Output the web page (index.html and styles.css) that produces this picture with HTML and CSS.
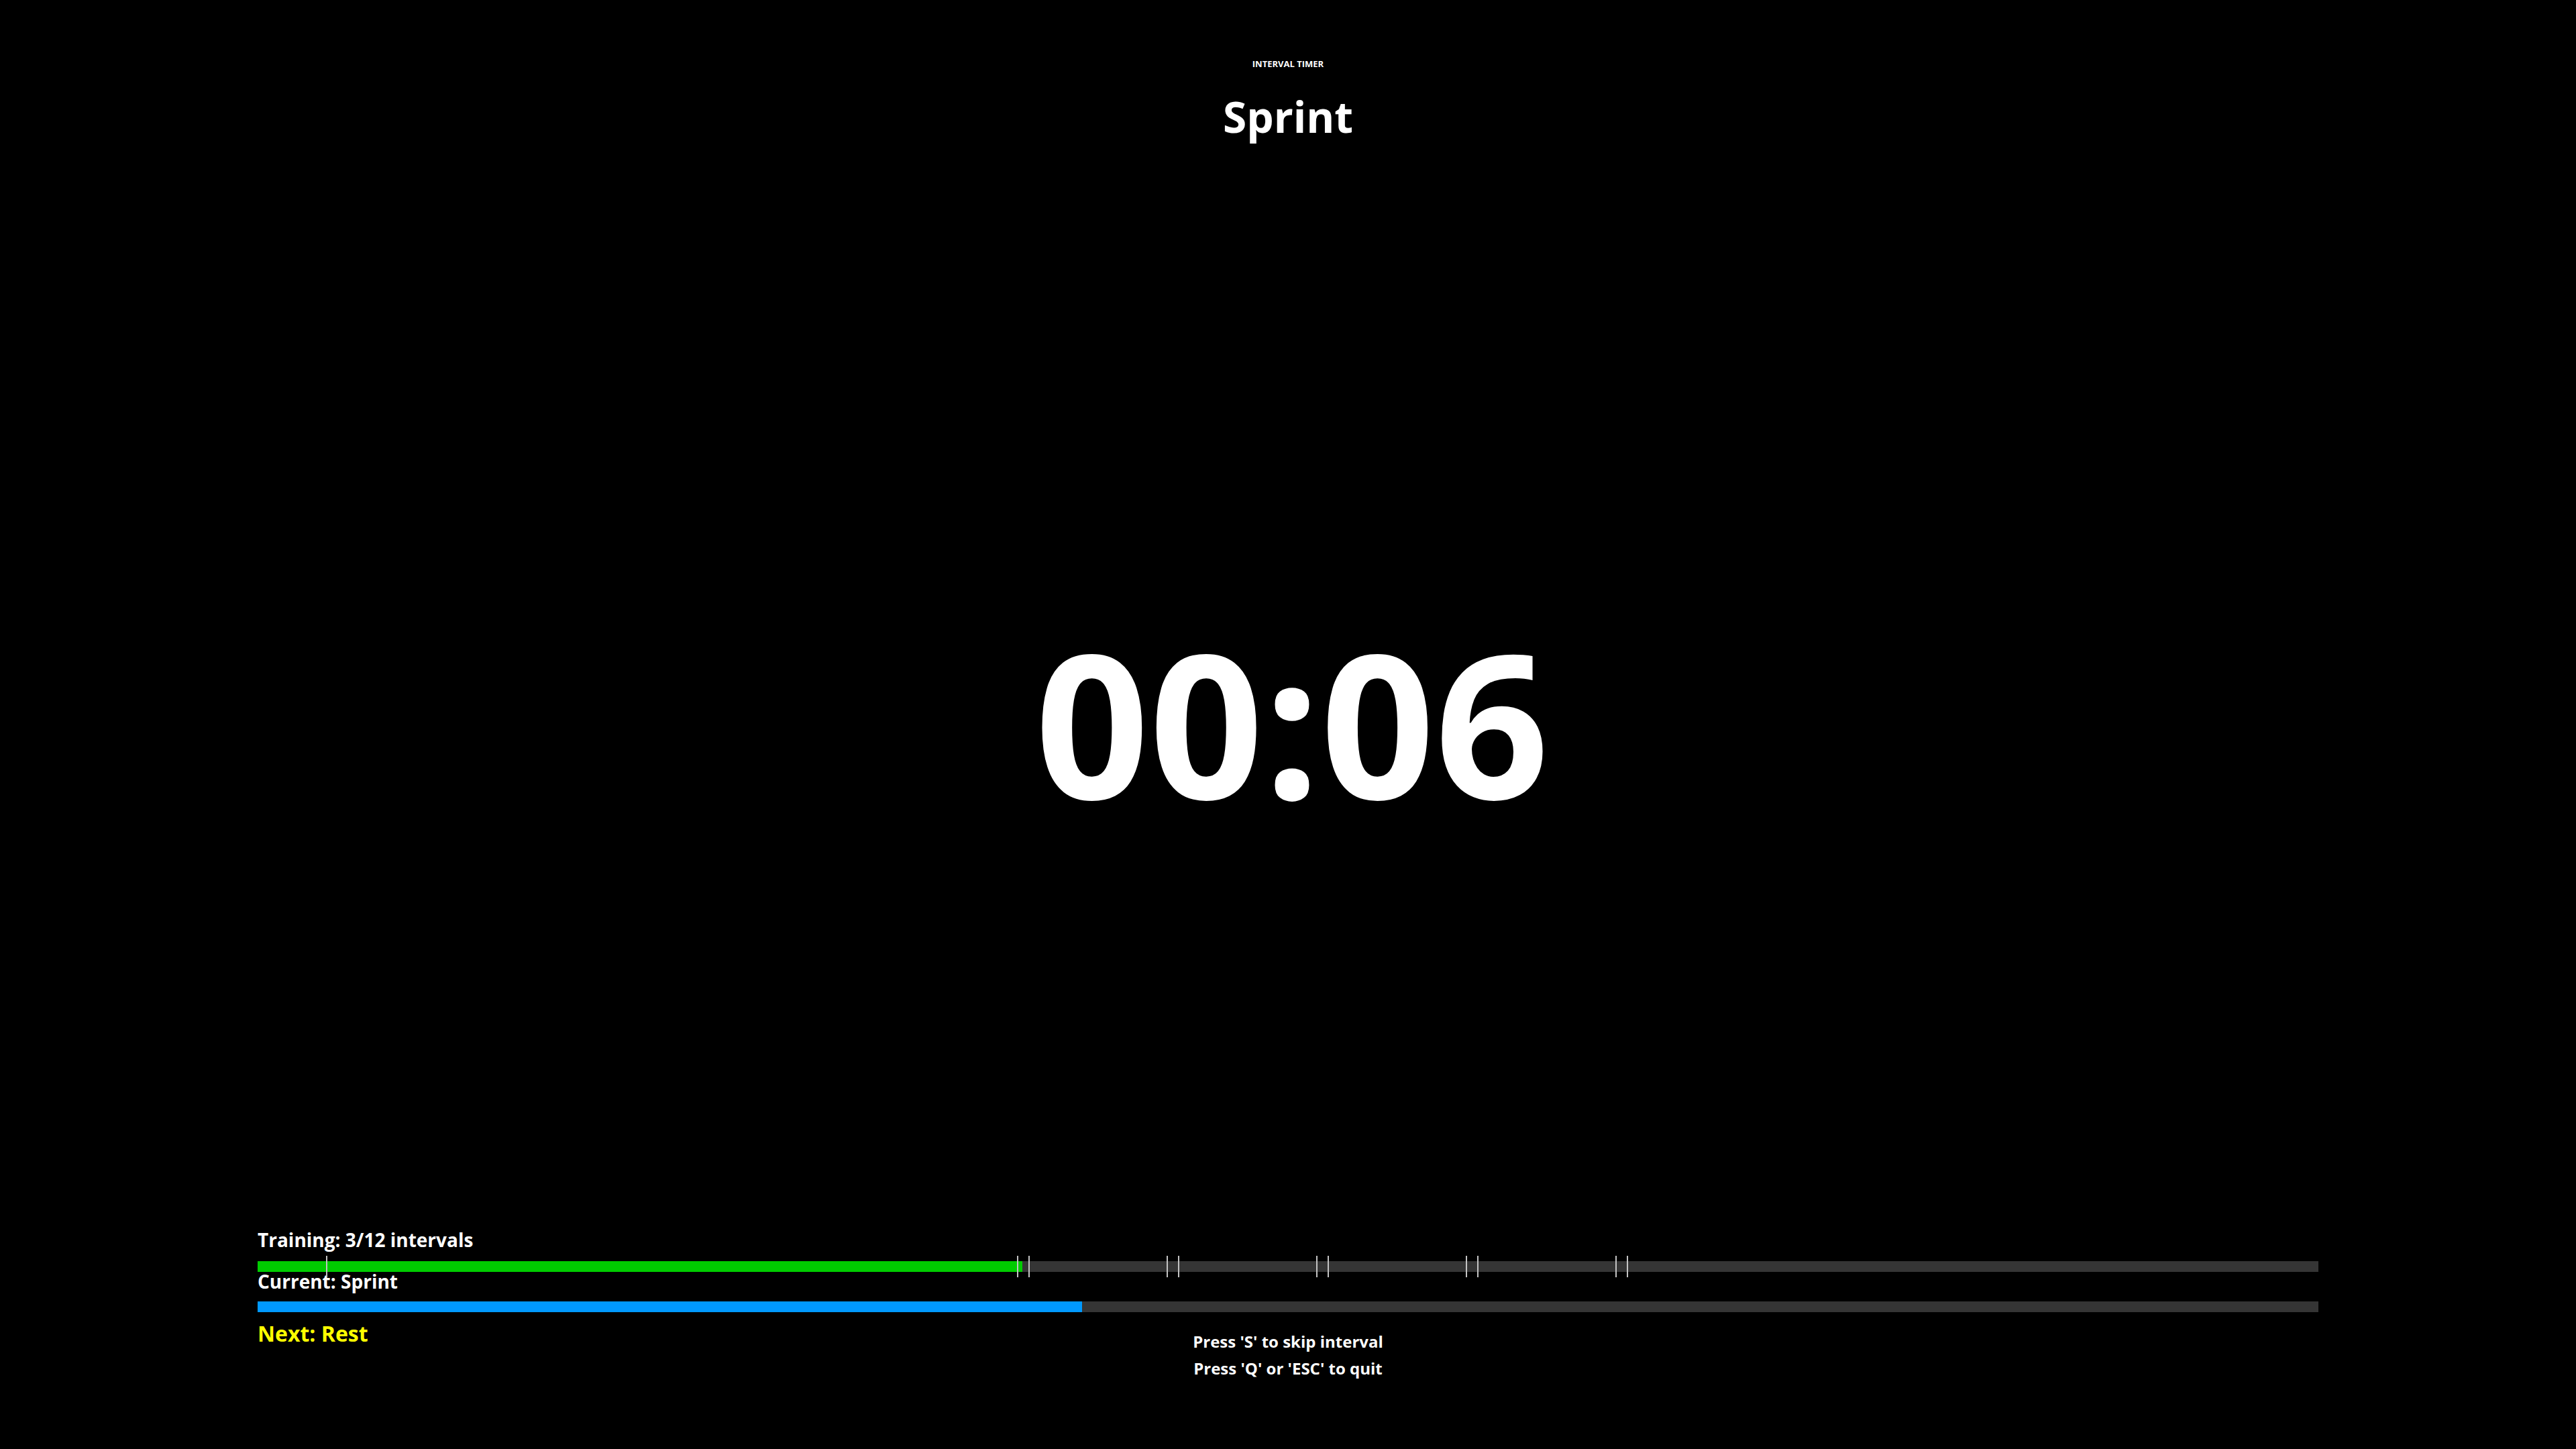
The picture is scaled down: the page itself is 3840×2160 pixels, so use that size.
FILE: index.html
```html
<!DOCTYPE html>
<html lang="en">
<head>
<meta charset="utf-8">
<title>Interval Timer</title>
<link rel="stylesheet" href="styles.css">
</head>
<body>
<div class="app">
  <header class="header">
    <div class="eyebrow">INTERVAL TIMER</div>
    <h1 class="phase">Sprint</h1>
  </header>
  <main class="clock">
    <div class="timer">00:06</div>
  </main>
  <footer class="footer">
    <div class="label">Training: 3/12 intervals</div>
    <div class="track track-total">
      <div class="fill fill-green" style="width:37.095%"></div>
      <span class="marker" style="left:3.352%"></span>
      <span class="marker" style="left:36.872%"></span>
      <span class="marker" style="left:37.430%"></span>
      <span class="marker" style="left:44.134%"></span>
      <span class="marker" style="left:44.693%"></span>
      <span class="marker" style="left:51.397%"></span>
      <span class="marker" style="left:51.955%"></span>
      <span class="marker" style="left:58.659%"></span>
      <span class="marker" style="left:59.218%"></span>
      <span class="marker" style="left:65.922%"></span>
      <span class="marker" style="left:66.480%"></span>
    </div>
    <div class="label label-current">Current: Sprint</div>
    <div class="track track-current">
      <div class="fill fill-blue" style="width:40%"></div>
    </div>
    <div class="bottom">
      <div class="next">Next: Rest</div>
      <div class="help">
        <div>Press 'S' to skip interval</div>
        <div>Press 'Q' or 'ESC' to quit</div>
      </div>
    </div>
  </footer>
</div>
</body>
</html>
```

FILE: styles.css
```css
html, body {
  margin: 0;
  padding: 0;
  background: #000;
}

body {
  font-family: "Open Sans", "Noto Sans", "Liberation Sans", sans-serif;
  font-weight: 700;
  color: #fff;
}

.app {
  width: 3840px;
  height: 2160px;
  display: flex;
  flex-direction: column;
  box-sizing: border-box;
  padding-top: 89px;
  overflow: hidden;
}

.header {
  display: flex;
  flex-direction: column;
  align-items: center;
}

.eyebrow {
  font-size: 13px;
  line-height: 1;
}

.phase {
  margin: 40px 0 0;
  font-size: 64px;
  line-height: 1;
  font-weight: 700;
}

.clock {
  display: flex;
  justify-content: center;
  margin-top: 720px;
}

.timer {
  font-size: 298px;
  line-height: 1;
  padding-left: 12px;
}

.footer {
  width: 3072px;
  margin: 0 auto;
  padding-top: 610px;
  display: flex;
  flex-direction: column;
}

.label {
  font-size: 28px;
  line-height: 1;
}

.track {
  position: relative;
  height: 16px;
  background: #353535;
}

.track-total {
  margin-top: 18px;
}

.label-current {
  margin-top: 0;
}

.track-current {
  margin-top: 16px;
}

.fill {
  height: 100%;
}

.fill-green {
  background: #00cc00;
}

.fill-blue {
  background: #0099ff;
}

.marker {
  position: absolute;
  top: -8px;
  width: 2px;
  height: 32px;
  margin-left: -1px;
  background: #c4c4c4;
}

.bottom {
  display: grid;
  margin-top: 16px;
}

.next,
.help {
  grid-area: 1 / 1;
}

.next {
  justify-self: start;
  font-size: 32px;
  line-height: 1;
  color: #ffff00;
}

.help {
  justify-self: center;
  margin-top: 8px;
  font-size: 24px;
  line-height: 40px;
  text-align: center;
}
```
